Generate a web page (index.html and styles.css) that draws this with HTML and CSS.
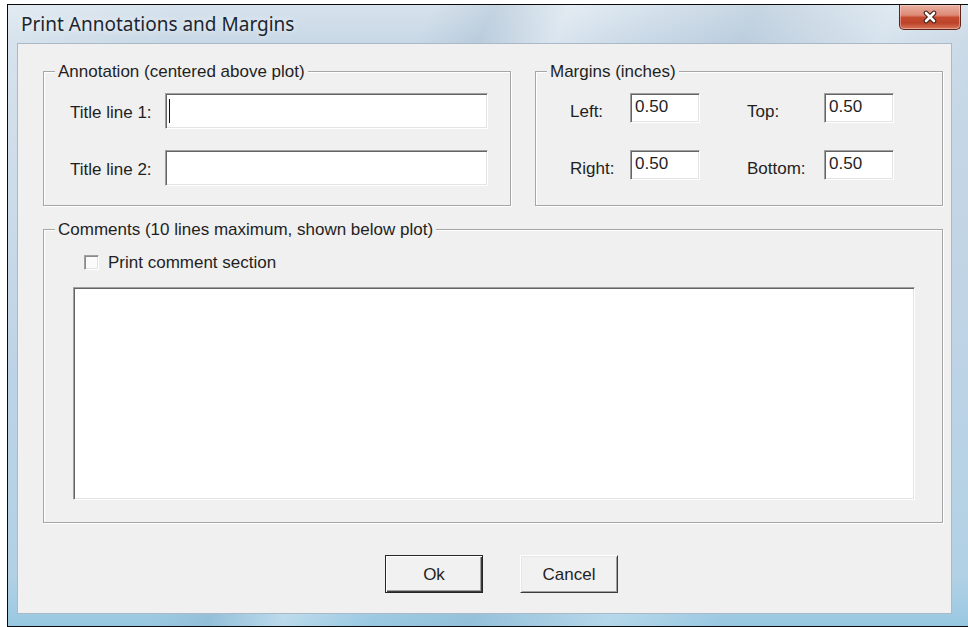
FILE: index.html
```html
<!DOCTYPE html>
<html lang="en">
<head>
<meta charset="utf-8">
<title>Print Annotations and Margins</title>
<link rel="stylesheet" href="styles.css">
</head>
<body>
<div class="window">
  <div class="titlebar">
    <span class="title">Print Annotations and Margins</span>
    <div class="close" aria-label="Close">
      <svg width="18" height="14" viewBox="0 0 18 14">
        <path d="M5 3 L13 11 M13 3 L5 11" stroke="#3b1d17" stroke-width="4.6" stroke-linecap="round" fill="none"/>
        <path d="M5 3 L13 11 M13 3 L5 11" stroke="#ffffff" stroke-width="2.6" stroke-linecap="round" fill="none"/>
      </svg>
    </div>
  </div>

  <div class="client">
    <div class="top-row">
      <fieldset class="group annotation">
        <legend>Annotation (centered above plot)</legend>
        <div class="title-rows">
          <div class="row">
            <span class="label">Title line 1:</span>
            <div class="field wide"><span class="caret"></span></div>
          </div>
          <div class="row">
            <span class="label">Title line 2:</span>
            <div class="field wide"></div>
          </div>
        </div>
      </fieldset>

      <fieldset class="group margins">
        <legend>Margins (inches)</legend>
        <div class="margin-grid">
          <span class="label">Left:</span>
          <div class="field small">0.50</div>
          <span class="label">Top:</span>
          <div class="field small">0.50</div>
          <span class="label">Right:</span>
          <div class="field small">0.50</div>
          <span class="label">Bottom:</span>
          <div class="field small">0.50</div>
        </div>
      </fieldset>
    </div>

    <fieldset class="group comments">
      <legend>Comments (10 lines maximum, shown below plot)</legend>
      <div class="check-row">
        <span class="checkbox"></span>
        <span class="label">Print comment section</span>
      </div>
      <div class="memo"></div>
    </fieldset>

    <div class="buttons">
      <div class="btn default">Ok</div>
      <div class="btn">Cancel</div>
    </div>
  </div>
</div>
</body>
</html>
```

FILE: styles.css
```css
* {
  box-sizing: border-box;
}

html,
body {
  margin: 0;
  height: 100%;
}

body {
  background: #ffffff;
  overflow: hidden;
  font-family: "Liberation Sans", Arial, sans-serif;
  font-size: 17px;
  color: #1f1f1f;
}

/* Aero glass frame */
.window {
  margin: 4px 0 0 7px;
  width: 963px;
  height: 623px;
  border: 1px solid #0b0b0b;
  display: flex;
  flex-direction: column;
  background:
    linear-gradient(115deg,
      rgba(255, 255, 255, 0.30) 0%,
      rgba(255, 255, 255, 0) 14%,
      rgba(255, 255, 255, 0) 34%,
      rgba(110, 140, 170, 0.16) 39%,
      rgba(255, 255, 255, 0.32) 45%,
      rgba(255, 255, 255, 0) 52%,
      rgba(110, 140, 170, 0.14) 60%,
      rgba(255, 255, 255, 0.26) 71%,
      rgba(255, 255, 255, 0) 80%),
    linear-gradient(180deg, #d6e2ec 0px, #c8d8e6 38px, #c0d4e5 300px, #b2d1e5 570px, #98c8e2 623px);
}

.titlebar {
  height: 39px;
  flex: none;
  display: flex;
  align-items: flex-start;
  padding: 0 8px 0 13px;
}

.title {
  margin-top: 7px;
  font-family: "Noto Sans", "Open Sans", sans-serif;
  font-size: 19px;
  line-height: 24px;
  color: #1c2630;
  text-shadow: 0 0 6px rgba(255, 255, 255, 0.9);
}

.close {
  margin-left: auto;
  width: 62px;
  height: 25px;
  border: 1px solid #5e261b;
  border-top: none;
  border-radius: 0 0 5px 5px;
  display: flex;
  align-items: center;
  justify-content: center;
  background: linear-gradient(180deg, #eab0a2 0%, #dd8a76 42%, #c64a30 52%, #bb4329 75%, #d9755a 100%);
  box-shadow: inset 0 0 0 1px rgba(255, 220, 210, 0.45);
}

/* dialog client area */
.client {
  flex: 1;
  margin: 0 18px 13px 10px;
  background: #f0f0f0;
  box-shadow: 0 0 0 1px #a9b9c8;
  display: flex;
  flex-direction: column;
  padding: 18px 0 0 25px;
}

.top-row {
  display: flex;
  gap: 24px;
}

/* etched group boxes */
.group {
  margin: 0;
  padding: 0;
  min-width: 0;
  border: 1px solid #a6a6a6;
  box-shadow: inset 1px 1px 0 #ffffff, 1px 1px 0 #ffffff;
}

.group legend {
  margin-left: 11px;
  padding: 0 3px;
  line-height: 19px;
  background: #f0f0f0;
}

.label {
  line-height: 19px;
  white-space: nowrap;
}

/* sunken edit boxes */
.field,
.memo {
  background: #ffffff;
  border-top: 1px solid #a0a0a0;
  border-left: 1px solid #a0a0a0;
  border-right: 1px solid #ffffff;
  border-bottom: 1px solid #ffffff;
  box-shadow: inset 1px 1px 0 #646464, inset -1px -1px 0 #e4e4e4;
}

.annotation {
  width: 468px;
  height: 144px;
}

.title-rows {
  margin-top: 12px;
  padding-left: 26px;
  display: flex;
  flex-direction: column;
  gap: 21px;
}

.row {
  display: flex;
  align-items: center;
}

.row .label {
  width: 95px;
  padding-top: 3px;
}

.field.wide {
  width: 323px;
  height: 36px;
  display: flex;
  align-items: center;
  padding-left: 3px;
}

.caret {
  width: 1px;
  height: 24px;
  background: #111111;
}

.margins {
  width: 408px;
  height: 144px;
}

.margin-grid {
  margin-top: 12px;
  padding-left: 34px;
  display: grid;
  grid-template-columns: 60px 117px 77px 70px;
  grid-auto-rows: 30px;
  row-gap: 27px;
  align-items: center;
}

.margin-grid .label {
  padding-top: 7px;
}

.field.small {
  width: 70px;
  height: 30px;
  padding-left: 4px;
  line-height: 26px;
}

.comments {
  margin-top: 14px;
  width: 900px;
  height: 303px;
}

.check-row {
  margin-top: 14px;
  padding-left: 40px;
  display: flex;
  align-items: center;
  gap: 9px;
}

.checkbox {
  width: 15px;
  height: 15px;
  background: #fbfbfb;
  border-top: 1px solid #a0a0a0;
  border-left: 1px solid #a0a0a0;
  border-right: 1px solid #ffffff;
  border-bottom: 1px solid #ffffff;
  box-shadow: inset 1px 1px 0 #8a8a8a, inset -1px -1px 0 #e4e4e4;
}

.memo {
  margin: 15px 0 0 29px;
  width: 842px;
  height: 213px;
}

/* push buttons */
.buttons {
  margin: 32px 0 0 342px;
  display: flex;
  gap: 37px;
}

.btn {
  width: 98px;
  height: 38px;
  display: flex;
  align-items: center;
  justify-content: center;
  background: #f1f1f1;
  border-top: 1px solid #ffffff;
  border-left: 1px solid #ffffff;
  border-right: 1px solid #3c3c3c;
  border-bottom: 1px solid #3c3c3c;
  box-shadow: inset 1px 1px 0 #e6e6e6, inset -1px -1px 0 #a0a0a0;
  padding-top: 1px;
}

.btn.default {
  border: 1px solid #262626;
  box-shadow: inset 1px 1px 0 #ffffff, inset -1px -1px 0 #3c3c3c, inset -2px -2px 0 #a0a0a0;
}
```
